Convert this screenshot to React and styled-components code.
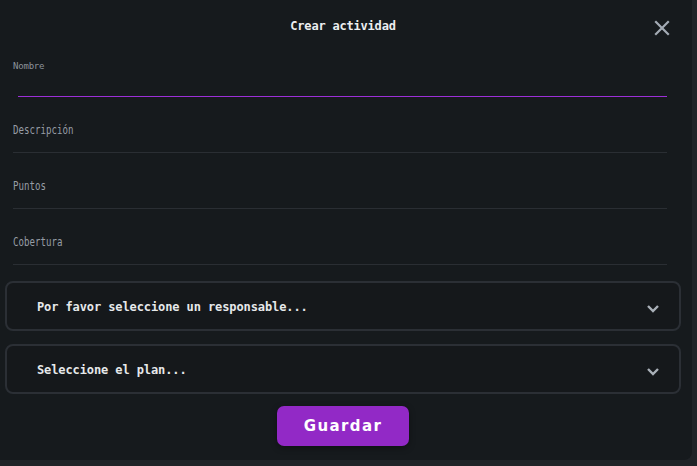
import styled, { createGlobalStyle } from "styled-components";

const Global = createGlobalStyle`
  html, body {
    margin: 0;
    padding: 0;
    background: #202327;
    width: 697px;
    height: 466px;
    overflow: hidden;
  }
`;

const fields = ["Descripción", "Puntos", "Cobertura"];
const selects = ["Por favor seleccione un responsable...", "Seleccione el plan..."];

const App = () => {
  return (
    <>
      <Global />
      <Modal>
        <Header>
          <Title>Crear actividad</Title>
          <Close aria-label="cerrar">
            <svg width="16" height="16" viewBox="0 0 16 16">
              <path d="M2 2 L14 14 M14 2 L2 14" stroke="#a3abb4" strokeWidth="2.2" strokeLinecap="square" />
            </svg>
          </Close>
        </Header>
        <Fields>
          <Field focused>
            <Label>Nombre</Label>
          </Field>
          {fields.map((f) => (
            <Field key={f}>
              <Placeholder>{f}</Placeholder>
            </Field>
          ))}
        </Fields>
        <Selects>
          {selects.map((s) => (
            <Select key={s}>
              <SelectText>{s}</SelectText>
              <Chevron width="14" height="9" viewBox="0 0 14 9">
                <path d="M2 2 L7 7 L12 2" fill="none" stroke="#a9b0b8" strokeWidth="2.4" />
              </Chevron>
            </Select>
          ))}
        </Selects>
        <Footer>
          <Button>Guardar</Button>
        </Footer>
      </Modal>
    </>
  );
};

const Modal = styled.div`
  width: 692px;
  height: 460px;
  background: #161a1d;
  border-radius: 0 0 8px 0;
  box-sizing: border-box;
  padding: 0 11px 0 5px;
  display: flex;
  flex-direction: column;
  font-family: "DejaVu Sans Mono", "Liberation Mono", monospace;
`;

const Header = styled.div`
  height: 41px;
  display: flex;
  align-items: flex-start;
  justify-content: center;
  position: relative;
  padding-top: 19px;
  box-sizing: border-box;
`;

const Title = styled.div`
  color: #eceef0;
  font-size: 12px;
  font-weight: bold;
  letter-spacing: -0.2px;
`;

const Close = styled.div`
  position: absolute;
  right: 11px;
  top: 20px;
  width: 16px;
  height: 16px;
  display: flex;
`;

const Fields = styled.div`
  display: flex;
  flex-direction: column;
  margin: 0 14px 0 8px;
`;

const Field = styled.div`
  height: 56px;
  box-sizing: border-box;
  border-bottom: 1px solid ${(p) => (p.focused ? "#9c2fd8" : "#2a2e33")};
  margin-left: ${(p) => (p.focused ? "5px" : "0")};
  padding-top: ${(p) => (p.focused ? "20px" : "26px")};
`;

const Label = styled.div`
  color: #8c939b;
  font-size: 9px;
  margin-left: -5px;
  letter-spacing: -0.2px;
`;

const Placeholder = styled.div`
  color: #969da5;
  font-size: 12px;
  transform: scaleX(0.76);
  transform-origin: left center;
`;

const Selects = styled.div`
  display: flex;
  flex-direction: column;
  gap: 13px;
  margin-top: 16px;
`;

const Select = styled.div`
  height: 50px;
  box-sizing: border-box;
  border: 2px solid #2b2f35;
  border-radius: 8px;
  background: #15181b;
  display: flex;
  align-items: center;
  justify-content: space-between;
  padding: 0 19px 0 30px;
`;

const SelectText = styled.div`
  color: #e6e8ea;
  font-size: 12px;
  font-weight: bold;
  letter-spacing: -0.1px;
  margin-top: 1px;
`;

const Chevron = styled.svg`
  margin-top: 5px;
`;

const Footer = styled.div`
  display: flex;
  justify-content: center;
  margin-top: 12px;
`;

const Button = styled.button`
  width: 132px;
  height: 40px;
  border: none;
  border-radius: 7px;
  background: #9229c6;
  color: #ffffff;
  font-family: "DejaVu Sans", Verdana, sans-serif;
  font-size: 15px;
  font-weight: bold;
  letter-spacing: 1.4px;
  box-shadow: 0 2px 6px rgba(0, 0, 0, 0.35);
  cursor: pointer;
`;

export default App;
